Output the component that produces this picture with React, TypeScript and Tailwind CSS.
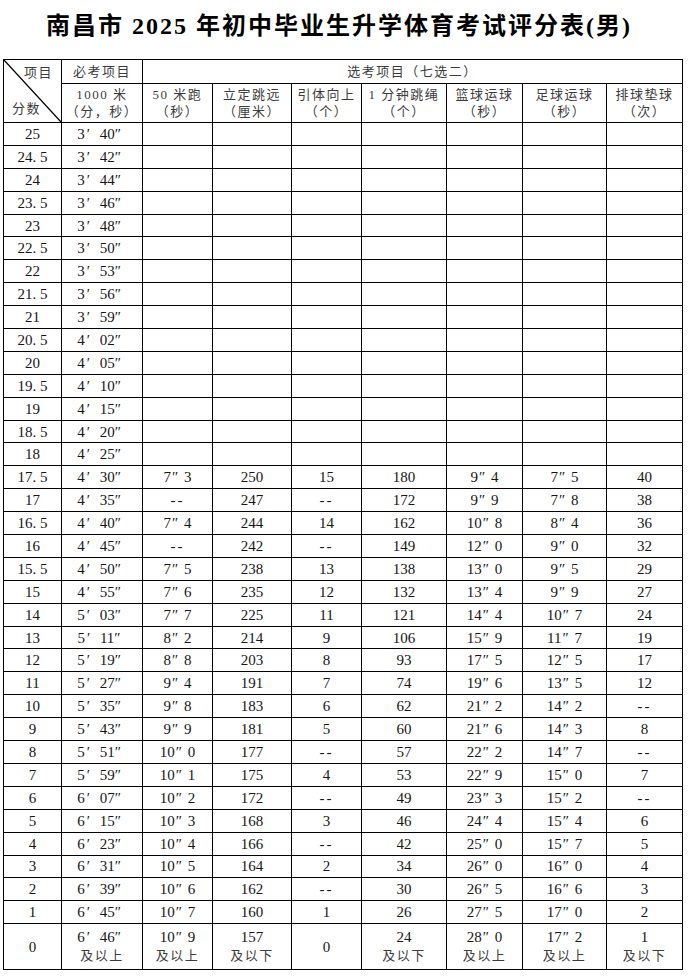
const cell = 'border-[1.5px] border-black p-0 text-center align-middle';

// score, 1000m, 50m, 立定跳远, 引体向上, 跳绳, 篮球, 足球, 排球
const rows: string[][] = [
  ['25', '3:40'],
  ['24. 5', '3:42'],
  ['24', '3:44'],
  ['23. 5', '3:46'],
  ['23', '3:48'],
  ['22. 5', '3:50'],
  ['22', '3:53'],
  ['21. 5', '3:56'],
  ['21', '3:59'],
  ['20. 5', '4:02'],
  ['20', '4:05'],
  ['19. 5', '4:10'],
  ['19', '4:15'],
  ['18. 5', '4:20'],
  ['18', '4:25'],
  ['17. 5', '4:30', '7.3', '250', '15', '180', '9.4', '7.5', '40'],
  ['17', '4:35', '--', '247', '--', '172', '9.9', '7.8', '38'],
  ['16. 5', '4:40', '7.4', '244', '14', '162', '10.8', '8.4', '36'],
  ['16', '4:45', '--', '242', '--', '149', '12.0', '9.0', '32'],
  ['15. 5', '4:50', '7.5', '238', '13', '138', '13.0', '9.5', '29'],
  ['15', '4:55', '7.6', '235', '12', '132', '13.4', '9.9', '27'],
  ['14', '5:03', '7.7', '225', '11', '121', '14.4', '10.7', '24'],
  ['13', '5:11', '8.2', '214', '9', '106', '15.9', '11.7', '19'],
  ['12', '5:19', '8.8', '203', '8', '93', '17.5', '12.5', '17'],
  ['11', '5:27', '9.4', '191', '7', '74', '19.6', '13.5', '12'],
  ['10', '5:35', '9.8', '183', '6', '62', '21.2', '14.2', '--'],
  ['9', '5:43', '9.9', '181', '5', '60', '21.6', '14.3', '8'],
  ['8', '5:51', '10.0', '177', '--', '57', '22.2', '14.7', '--'],
  ['7', '5:59', '10.1', '175', '4', '53', '22.9', '15.0', '7'],
  ['6', '6:07', '10.2', '172', '--', '49', '23.3', '15.2', '--'],
  ['5', '6:15', '10.3', '168', '3', '46', '24.4', '15.4', '6'],
  ['4', '6:23', '10.4', '166', '--', '42', '25.0', '15.7', '5'],
  ['3', '6:31', '10.5', '164', '2', '34', '26.0', '16.0', '4'],
  ['2', '6:39', '10.6', '162', '--', '30', '26.5', '16.6', '3'],
  ['1', '6:45', '10.7', '160', '1', '26', '27.5', '17.0', '2'],
];

const heads = [
  ['1000 米', '（分，秒）'],
  ['50 米跑', '（秒）'],
  ['立定跳远', '（厘米）'],
  ['引体向上', '（个）'],
  ['1 分钟跳绳', '（个）'],
  ['篮球运球', '（秒）'],
  ['足球运球', '（秒）'],
  ['排球垫球', '（次）'],
];

const widths = ['w-[58px]', 'w-[81px]', 'w-[70px]', 'w-[79px]', 'w-[70px]', 'w-[85px]', 'w-[76px]', 'w-[84px]', 'w-[76px]'];

function Value({ v, col }: { v?: string; col: number }) {
  if (!v) return null;
  if (v === '--') return <span className="tracking-[2px]">--</span>;
  if (col === 1) {
    const [m, s] = v.split(':');
    return (
      <span className="whitespace-nowrap pr-[6px]">
        {m}
        <span className="inline-block w-[15px] pl-[2px] text-left">′</span>
        {s}″
      </span>
    );
  }
  if (col === 2 || col === 6 || col === 7) {
    const [a, b] = v.split('.');
    return (
      <span className="whitespace-nowrap">
        {a}
        <span className="inline-block w-[13px] pl-[1px] text-left">″</span>
        {b}
      </span>
    );
  }
  return <span>{v}</span>;
}

function Cjk({ children }: { children: React.ReactNode }) {
  return <span className="whitespace-nowrap text-[13px] tracking-[1.5px] text-[#3c3c3c]">{children}</span>;
}

export default function App() {
  return (
    <div className="min-h-[976px] bg-white font-['Liberation_Serif','Noto_Sans_CJK_SC',serif] text-[#161616]">
      <h1 className="flex h-[59px] items-center justify-center pb-[8px] pr-[10px] text-[24px] font-bold tracking-[2px] text-black">
        南昌市 2025 年初中毕业生升学体育考试评分表(男)
      </h1>
      <table className="ml-[3px] w-[679px] table-fixed border-collapse border-[1.5px] border-black text-[15px] leading-[16px]">
        <colgroup>
          {widths.map((w, i) => (
            <col key={i} className={w} />
          ))}
        </colgroup>
        <thead>
          <tr className="h-[24px]">
            <td rowSpan={2} className={`${cell} relative`}>
              <svg className="absolute inset-0 h-full w-full" preserveAspectRatio="none" viewBox="0 0 100 100">
                <line x1="0" y1="0" x2="100" y2="100" stroke="#000" strokeWidth="1.3" vectorEffect="non-scaling-stroke" />
              </svg>
              <div className="flex h-[62px] flex-col justify-between pt-[4px] pb-[5px] pl-[8px] pr-[8px]">
                <div className="text-right">
                  <Cjk>项目</Cjk>
                </div>
                <div className="text-left">
                  <Cjk>分数</Cjk>
                </div>
              </div>
            </td>
            <td className={cell}>
              <Cjk>必考项目</Cjk>
            </td>
            <td colSpan={7} className={cell}>
              <Cjk>选考项目（七选二）</Cjk>
            </td>
          </tr>
          <tr className="h-[39px]">
            {heads.map(([a, b]) => (
              <td key={a} className={cell}>
                <div>
                  <Cjk>{a}</Cjk>
                </div>
                <div>
                  <Cjk>{b}</Cjk>
                </div>
              </td>
            ))}
          </tr>
        </thead>
        <tbody>
          {rows.map((r) => (
            <tr key={r[0]} className="h-[22.9px]">
              {Array.from({ length: 9 }).map((_, i) => (
                <td key={i} className={cell}>
                  {i === 0 ? r[0] : <Value v={r[i]} col={i} />}
                </td>
              ))}
            </tr>
          ))}
          <tr className="h-[46px] leading-[18px]">
            <td className={cell}>0</td>
            <td className={cell}>
              <div><Value v="6:46" col={1} /></div>
              <div><Cjk>及以上</Cjk></div>
            </td>
            <td className={cell}>
              <div><Value v="10.9" col={2} /></div>
              <div><Cjk>及以上</Cjk></div>
            </td>
            <td className={cell}>
              <div>157</div>
              <div><Cjk>及以下</Cjk></div>
            </td>
            <td className={cell}>0</td>
            <td className={cell}>
              <div>24</div>
              <div><Cjk>及以下</Cjk></div>
            </td>
            <td className={cell}>
              <div><Value v="28.0" col={6} /></div>
              <div><Cjk>及以上</Cjk></div>
            </td>
            <td className={cell}>
              <div><Value v="17.2" col={7} /></div>
              <div><Cjk>及以上</Cjk></div>
            </td>
            <td className={cell}>
              <div>1</div>
              <div><Cjk>及以下</Cjk></div>
            </td>
          </tr>
        </tbody>
      </table>
    </div>
  );
}
